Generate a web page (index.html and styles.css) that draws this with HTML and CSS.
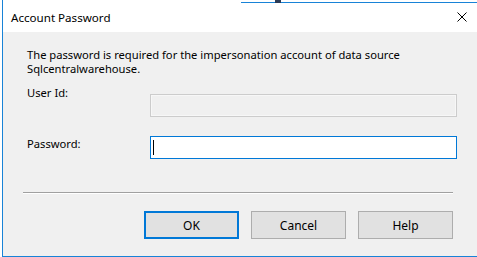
FILE: index.html
```html
<!DOCTYPE html>
<html>
<head>
<meta charset="utf-8">
<link rel="stylesheet" href="styles.css">
</head>
<body>
<div class="window">
  <div class="titlebar">
    <span class="title">Account Password</span>
    <svg class="close" width="10" height="10" viewBox="0 0 10 10"><path d="M0.5 0.5 L9.5 9.5 M9.5 0.5 L0.5 9.5" stroke="#000" stroke-width="1" fill="none"/></svg>
  </div>
  <div class="content">
    <p class="message">The password is required for the impersonation account of data source<br>Sqlcentralwarehouse.</p>
    <div class="row row-user">
      <span class="label">User Id:</span>
      <div class="field field-disabled"></div>
    </div>
    <div class="row row-pass">
      <span class="label">Password:</span>
      <div class="field field-focus"><span class="caret"></span></div>
    </div>
    <div class="separator"></div>
    <div class="buttons">
      <div class="btn btn-default">OK</div>
      <div class="btn">Cancel</div>
      <div class="btn">Help</div>
    </div>
  </div>
</div>
</body>
</html>
```
FILE: styles.css
```css
html, body {
  margin: 0;
  padding: 0;
  background: #ffffff;
  overflow: hidden;
}
body {
  width: 477px;
  height: 257px;
  font-family: "Noto Sans", "Open Sans", sans-serif;
  font-size: 11.2px;
  color: #000;
}
.window {
  position: relative;
  margin-left: 2px;
  width: 475px;
  height: 257px;
  box-sizing: border-box;
  border-left: 1px solid #1883d7;
  border-bottom: 1px solid #1883d7;
  display: flex;
  flex-direction: column;
}
.window::before {
  content: "";
  position: absolute;
  top: 2px;
  left: 238px;
  right: 0;
  height: 1px;
  background: #1883d7;
}
.window::after {
  content: "";
  position: absolute;
  top: 0;
  left: 272px;
  width: 6px;
  height: 3px;
  background: #2b3a55;
}
.titlebar {
  height: 32px;
  background: #fff;
  display: flex;
  align-items: center;
  padding: 2px 10px 0 8px;
  box-sizing: border-box;
  flex: none;
}
.title {
  font-size: 11.6px;
  flex: 1;
}
.close {
  display: block;
}
.content {
  flex: 1;
  background: #f0f0f0;
  padding: 15.5px 24px 0 20px;
  display: flex;
  flex-direction: column;
}
.message {
  margin: 0;
  padding-left: 4px;
  line-height: 14px;
}
.row {
  display: flex;
  align-items: flex-start;
  padding-left: 4px;
  width: 430px;
}
.label {
  width: 123px;
  line-height: 13px;
  flex: none;
}
.row-user {
  margin-top: 10.5px;
}
.row-user .field {
  margin-top: 8px;
}
.row-pass {
  margin-top: 19px;
}
.row-pass .label {
  margin-top: 1px;
}
.field {
  flex: 1;
  height: 23px;
  box-sizing: border-box;
  position: relative;
}
.field-disabled {
  border: 1px solid #cccccc;
  background: #f0f0f0;
  box-shadow: inset 0 0 0 1px #f7f7f7;
}
.field-focus {
  border: 1px solid #0078d7;
  background: #ffffff;
}
.caret {
  position: absolute;
  left: 2px;
  top: 3px;
  width: 1px;
  height: 15px;
  background: #000;
}
.separator {
  margin-top: 33px;
  height: 1px;
  background: #a0a0a0;
  border-bottom: 1px solid #ffffff;
}
.buttons {
  margin-top: 17px;
  display: flex;
  justify-content: flex-end;
  gap: 12px;
}
.btn {
  width: 95px;
  height: 28px;
  box-sizing: border-box;
  border: 1px solid #adadad;
  background: #e1e1e1;
  display: flex;
  align-items: center;
  justify-content: center;
  font-size: 12px;
}
.btn-default {
  border: 2px solid #0078d7;
}
```
